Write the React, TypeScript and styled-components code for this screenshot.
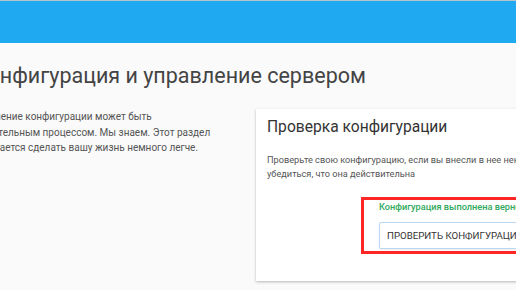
import React from 'react'
import styled, { createGlobalStyle } from 'styled-components'

const GlobalStyle = createGlobalStyle`
  html, body {
    margin: 0;
    padding: 0;
    background: #fafafa;
    overflow: hidden;
  }

  body {
    width: 516px;
    height: 290px;
    font-family: Roboto, "Noto Sans", Arial, sans-serif;
    color: #444;
  }
`

const Page = styled.div`
  height: 290px;
  overflow: hidden;
`

const TopBar = styled.header`
  height: 42px;
  background: #1ea9f0;
  border-top: 1px solid #b8c4cc;
`

// the page is scrolled a little to the right, so the left edge is cut
const Main = styled.main`
  margin-left: -26px;
  padding-top: 19px;
`

const Title = styled.h1`
  margin: 0;
  font-size: 21.5px;
  line-height: 28px;
  font-weight: 400;
  color: #444;
  white-space: nowrap;
`

const Columns = styled.div`
  display: flex;
  align-items: flex-start;
  margin-top: 19px;
`

const Intro = styled.p`
  width: 250px;
  flex: none;
  margin: 0 36px 0 -4px;
  font-size: 10px;
  line-height: 15.5px;
  color: #555;
`

const Card = styled.section`
  flex: none;
  width: 385px;
  padding: 7px 11px 27px;
  background: #fff;
  box-shadow: 0 1px 3px rgba(0, 0, 0, 0.18), 0 1px 2px rgba(0, 0, 0, 0.1);
`

const CardTitle = styled.h2`
  margin: 0;
  font-size: 15.6px;
  line-height: 22px;
  font-weight: 400;
  color: #333;
`

const CardText = styled.p`
  margin: 15px 0 0;
  font-size: 9.2px;
  line-height: 14px;
  color: #555;
`

const Actions = styled.div`
  display: flex;
  margin-top: 16px;
  padding-left: 94px;
`

const Highlight = styled.div`
  border: 3px solid #ff2626;
  padding: 0 15px 2px 15px;
`

const Status = styled.div<{ ok: boolean }>`
  font-size: 9.2px;
  line-height: 14px;
  font-weight: 500;
  color: ${({ ok }) => (ok ? '#2fa95c' : '#d33')};
  white-space: nowrap;
`

const CheckButton = styled.button`
  display: block;
  margin-top: 8px;
  height: 27px;
  padding: 0 7px;
  background: #fff;
  border: 1px solid #b9d6f2;
  border-radius: 2px;
  box-shadow: 0 1px 2px rgba(0, 0, 0, 0.08);
  font-family: inherit;
  font-size: 9.7px;
  color: #333;
  text-transform: uppercase;
  white-space: nowrap;
`

const App = () => (
  <Page>
    <GlobalStyle />
    <TopBar />
    <Main>
      <Title>Конфигурация и управление сервером</Title>
      <Columns>
        <Intro>
          Изменение конфигурации может быть утомительным процессом. Мы знаем.
          Этот раздел попытается сделать вашу жизнь немного легче.
        </Intro>
        <Card>
          <CardTitle>Проверка конфигурации</CardTitle>
          <CardText>
            Проверьте свою конфигурацию, если вы внесли в нее некоторые изменения, чтобы
            убедиться, что она действительна
          </CardText>
          <Actions>
            <Highlight>
              <Status ok>Конфигурация выполнена верно</Status>
              <CheckButton>Проверить конфигурацию</CheckButton>
            </Highlight>
          </Actions>
        </Card>
      </Columns>
    </Main>
  </Page>
)

export default App
